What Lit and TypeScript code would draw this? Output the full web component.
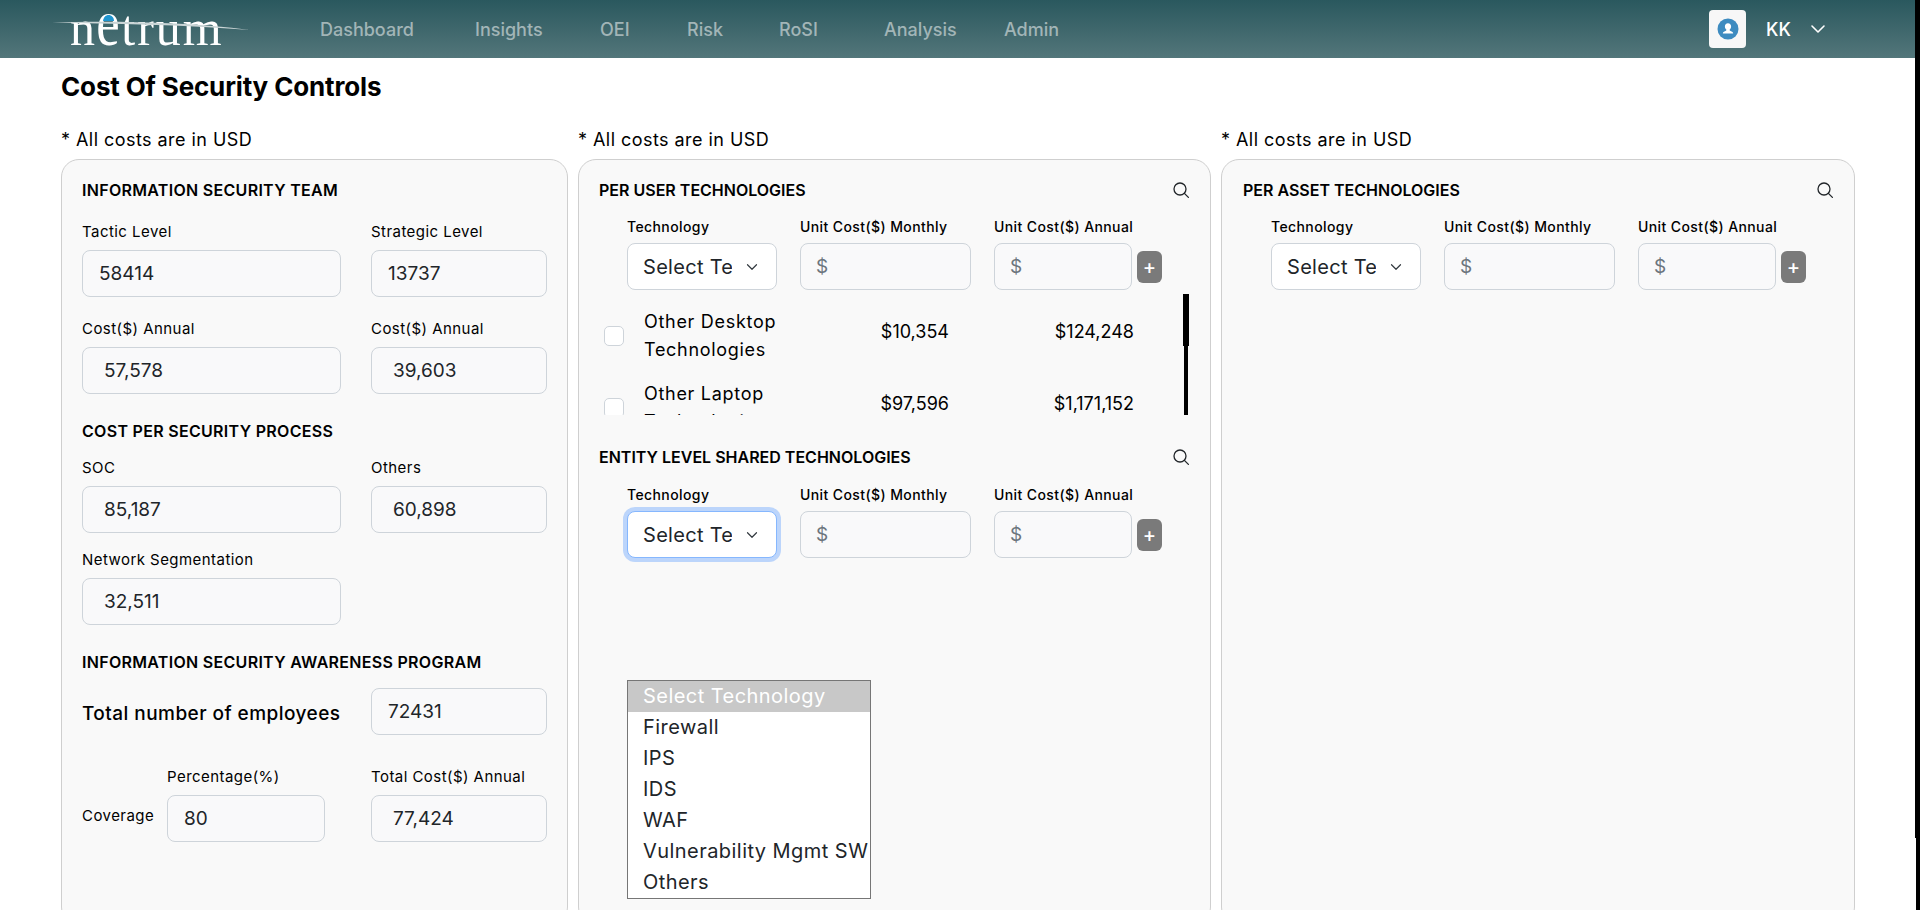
import { LitElement, html, css } from 'lit';
import { customElement } from 'lit/decorators.js';

const chevron = (w: number, color: string, sw: number) => html`<svg width=${w} height=${w} viewBox="0 0 16 16" fill="none" stroke=${color} stroke-width=${sw} stroke-linecap="round" stroke-linejoin="round"><path d="M2 5l6 6 6-6"/></svg>`;

const searchIcon = html`<svg class="search" width="18" height="18" viewBox="0 0 18 18" fill="none" stroke="#212529" stroke-width="1.3" stroke-linecap="round"><circle cx="8" cy="8" r="6"/><path d="M12.4 12.4l4 4"/></svg>`;

@customElement('tech-section')
class TechSection extends LitElement {
  static properties = {
    heading: {},
    focused: { type: Boolean },
  };
  declare heading: string;
  declare focused: boolean;

  static styles = css`
    :host { display: block; font-family: Inter, "Liberation Sans", sans-serif; }
    .head { display: flex; justify-content: space-between; align-items: center; height: 22px; }
    h3 { margin: 0; font-size: 16px; line-height: 22px; font-weight: 600; color: #000; }
    .row { display: grid; grid-template-columns: 150px 171px 138px 25px; column-gap: 23px; margin: 16px 0 0 28px; align-items: center; }
    :host([focused]) .row { margin-top: 17px; }
    label { font-size: 14px; line-height: 20px; font-weight: 500; letter-spacing: 0.4px; color: #000; white-space: nowrap; padding-bottom: 6px; }
    select, input { box-sizing: border-box; height: 47px; width: 100%; border: 1px solid #ced4da; border-radius: 8px; font: 400 19px Inter, "Liberation Sans", sans-serif; color: #212529; outline: none; }
    select {
      appearance: none; background: #fff url("data:image/svg+xml,%3csvg xmlns='http://www.w3.org/2000/svg' viewBox='0 0 16 16'%3e%3cpath fill='none' stroke='%23343a40' stroke-linecap='round' stroke-linejoin='round' stroke-width='1.6' d='M2 5l6 6 6-6'/%3e%3c/svg%3e") no-repeat right 18px center / 12px 12px;
      padding: 0 44px 0 15px; font-size: 20px; letter-spacing: 0.3px;
    }
    select.focused { border-color: #86b7fe; box-shadow: 0 0 0 4px #bcd5fb; }
    input { background: #f9f9fa; padding: 0 15px; }
    input::placeholder { color: #6c757d; opacity: 1; }
    .add { width: 25px; height: 32px; margin-left: -18px; border: 0; padding: 0; border-radius: 6px; background: #7a7a7a; color: #fff; font: 500 20px Inter, sans-serif; }
  `;

  render() {
    return html`
      <div class="head"><h3>${this.heading}</h3>${searchIcon}</div>
      <div class="row">
        <label>Technology</label>
        <label>Unit Cost($) Monthly</label>
        <label>Unit Cost($) Annual</label>
        <span></span>
        <select class=${this.focused ? 'focused' : ''}><option>Select Technology</option></select>
        <input placeholder="$" />
        <input placeholder="$" />
        <button class="add">+</button>
      </div>
    `;
  }
}

@customElement('app-root')
export class AppRoot extends LitElement {
  static styles = css`
    :host {
      display: block; position: relative; height: 100vh; overflow: hidden;
      font-family: Inter, "Liberation Sans", sans-serif; color: #000; background: #fff;
    }

    /* page scrollbar, the browser hides the real one */
    .page-track { position: absolute; top: 0; right: 0; bottom: 0; width: 4px; background: #000; }
    .page-thumb { position: absolute; top: 0; right: 0; width: 5px; height: 838px; background: #000; }

    .page { width: 1915px; }
    header {
      height: 58px; background: linear-gradient(180deg, #2a585e 0%, #53767a 100%);
      display: flex; align-items: center; color: #fff;
    }
    .logo { position: relative; width: 200px; height: 58px; margin-left: 52px; flex: none; }
    .logo-text {
      position: absolute; left: 18px; bottom: 8px; font-family: "Liberation Serif", serif;
      font-size: 50px; line-height: 44px; color: #fff; white-space: nowrap; letter-spacing: 2px;
    }
    .logo-text .e { display: inline-block; font-size: 66px; line-height: 44px; transform: scaleX(0.8); margin: 0 -3px 0 -4px; }
    .logo svg { position: absolute; inset: 0; }
    nav { display: grid; grid-template-columns: 155px 125px 87px 92px 105px 120px 80px; margin-left: 68px; }
    nav a { font-size: 18px; font-weight: 500; color: #a2b5b7; white-space: nowrap; }
    .user { margin-left: auto; display: flex; align-items: center; padding-right: 89px; }
    .avatar { width: 37px; height: 38px; border-radius: 4px; background: #f7f7f7; display: flex; align-items: center; justify-content: center; margin-right: 20px; }
    .kk { font-size: 18px; font-weight: 500; width: 44px; }

    h1 { margin: 11px 0 0; padding-left: 61px; font-size: 26px; line-height: 36px; font-weight: 700; letter-spacing: -0.15px; }
    .cols { display: grid; grid-template-columns: 507px 633px 634px; column-gap: 10px; padding-left: 61px; margin-top: 20px; }
    .note { font-size: 18px; line-height: 30px; height: 34px; letter-spacing: 0.45px; white-space: nowrap; }
    .card {
      box-sizing: border-box; height: 766px; background: #f9f9f9; border: 1.5px solid #cfcfcf; border-radius: 18px;
      padding: 19px 20px;
    }
    .card.asset { padding-left: 21px; }

    h3 { margin: 0; font-size: 16px; line-height: 22px; font-weight: 600; letter-spacing: 0.3px; white-space: nowrap; }
    .fields { display: grid; grid-template-columns: 259px 176px; column-gap: 30px; margin-top: 16px; }
    label { display: block; font-size: 15px; line-height: 20px; letter-spacing: 0.45px; margin-bottom: 8px; white-space: nowrap; }
    .field { margin-bottom: 17px; }
    input {
      box-sizing: border-box; display: block; width: 100%; height: 47px; background: #f9f9fa;
      border: 1px solid #ced4da; border-radius: 8px; padding: 0 16px; outline: none;
      font: 400 19px Inter, "Liberation Sans", sans-serif; color: #212529;
    }
    input.wide { padding-left: 21px; }

    .fields.first { margin-top: 21px; }
    .first .field { margin-bottom: 22px; }
    .sec-process { margin-top: 4px; }
    .sec-awareness { margin-top: 9px; }
    .employees { display: grid; grid-template-columns: 259px 176px; column-gap: 30px; align-items: center; margin-top: 15px; }
    .employees span { font-size: 19px; font-weight: 500; letter-spacing: 0.45px; white-space: nowrap; padding-top: 3px; }
    .coverage { display: grid; grid-template-columns: 85px 158px 176px; margin-top: 32px; }
    .coverage .last { margin-left: 46px; width: 176px; }
    .coverage .cap { font-size: 15px; letter-spacing: 0.45px; align-self: center; padding-bottom: 6px; }

    .list-wrap { position: relative; width: 585px; height: 121px; margin: 4px 0 0 5px; }
    .list { height: 121px; overflow: hidden; padding-top: 14px; box-sizing: border-box; }
    .list-track { position: absolute; top: 0; right: 1px; bottom: 0; width: 4px; background: #000; }
    .list-thumb { position: absolute; top: 0; right: -1px; width: 6px; height: 52px; background: #000; }
    .item { display: grid; grid-template-columns: 20px 188px 137px 185px; align-items: center; margin-bottom: 16px; height: 56px; }
    .check { width: 20px; height: 20px; box-sizing: border-box; background: #fff; border: 1px solid #ced4da; border-radius: 5px; }
    .name { font-size: 18px; line-height: 28px; letter-spacing: 0.7px; padding-left: 20px; }
    .num { font-size: 18px; text-align: right; padding-bottom: 10px; }

    .sec-entity { margin-top: 31px; position: relative; }
    .dropdown {
      position: absolute; left: 28px; top: 234px; width: 244px; height: 219px; box-sizing: border-box;
      background: #fff; border: 1px solid #767676; font-size: 20px; letter-spacing: 0.45px; color: #212529;
    }
    .dropdown div { height: 31px; line-height: 31px; padding-left: 15px; white-space: nowrap; overflow: hidden; }
    .dropdown .sel { background: #c8c8c8; color: #fff; }
  `;

  private field(label: string, value: string, wide = false) {
    return html`<div class="field"><label>${label}</label><input class=${wide ? 'wide' : ''} .value=${value} /></div>`;
  }

  private item(name: string, monthly: string, annual: string) {
    return html`<div class="item">
      <span class="check"></span>
      <span class="name">${name}</span>
      <span class="num">${monthly}</span>
      <span class="num">${annual}</span>
    </div>`;
  }

  render() {
    const nav = ['Dashboard', 'Insights', 'OEI', 'Risk', 'RoSI', 'Analysis', 'Admin'];
    const options = ['Firewall', 'IPS', 'IDS', 'WAF', 'Vulnerability Mgmt SW', 'Others'];
    return html`
      <div class="page">
        <header>
          <div class="logo">
            <div class="logo-text">n<span class="e">e</span>trum</div>
            <svg width="200" height="58" viewBox="0 0 200 58">
              <path d="M0 22.5 C50 21 130 21 198 30 C130 24.5 60 24 0 22.5Z" fill="#c9d4d5"/>
              <path d="M51 21 C51.5 17 54 15 56.5 15 C59.5 15 62 17.5 62 21Z" fill="#1f95cf"/>
            </svg>
          </div>
          <nav>${nav.map((n) => html`<a>${n}</a>`)}</nav>
          <div class="user">
            <div class="avatar">
              <svg width="22" height="22" viewBox="0 0 22 22"><circle cx="11" cy="11" r="10.5" fill="#3d8bc0"/><path d="M11 5.2c-2 0-3.1 1.5-3.1 3.3 0 1.3.6 2.4 1.4 3 .2.5.1 1-.4 1.3-1.2.6-2.9.9-3.1 2.7h10.4c-.2-1.8-1.9-2.1-3.1-2.7-.5-.3-.6-.8-.4-1.3.8-.6 1.4-1.7 1.4-3 0-1.8-1.1-3.3-3.1-3.3z" fill="#fff"/></svg>
            </div>
            <span class="kk">KK</span>
            ${chevron(16, '#fff', 1.6)}
          </div>
        </header>

        <h1>Cost Of Security Controls</h1>

        <div class="cols">
          <section>
            <div class="note">* All costs are in USD</div>
            <div class="card">
              <h3>INFORMATION SECURITY TEAM</h3>
              <div class="fields first">
                ${this.field('Tactic Level', '58414')}
                ${this.field('Strategic Level', '13737')}
                ${this.field('Cost($) Annual', '57,578', true)}
                ${this.field('Cost($) Annual', '39,603', true)}
              </div>
              <div class="sec-process">
                <h3>COST PER SECURITY PROCESS</h3>
                <div class="fields">
                  ${this.field('SOC', '85,187', true)}
                  ${this.field('Others', '60,898', true)}
                  ${this.field('Network Segmentation', '32,511', true)}
                </div>
              </div>
              <div class="sec-awareness">
                <h3>INFORMATION SECURITY AWARENESS PROGRAM</h3>
                <div class="employees">
                  <span>Total number of employees</span>
                  <input .value=${'72431'} />
                </div>
                <div class="coverage">
                  <span></span>
                  <label>Percentage(%)</label>
                  <label class="last">Total Cost($) Annual</label>
                  <span class="cap">Coverage</span>
                  <input .value=${'80'} />
                  <input class="last wide" .value=${'77,424'} />
                </div>
              </div>
            </div>
          </section>

          <section>
            <div class="note">* All costs are in USD</div>
            <div class="card">
              <tech-section heading="PER USER TECHNOLOGIES"></tech-section>
              <div class="list-wrap">
                <div class="list">
                  ${this.item('Other Desktop Technologies', '$10,354', '$124,248')}
                  ${this.item('Other Laptop Technologies', '$97,596', '$1,171,152')}
                </div>
                <div class="list-track"><div class="list-thumb"></div></div>
              </div>
              <div class="sec-entity">
                <tech-section heading="ENTITY LEVEL SHARED TECHNOLOGIES" focused></tech-section>
                <div class="dropdown">
                  <div class="sel">Select Technology</div>
                  ${options.map((o) => html`<div>${o}</div>`)}
                </div>
              </div>
            </div>
          </section>

          <section>
            <div class="note">* All costs are in USD</div>
            <div class="card asset">
              <tech-section heading="PER ASSET TECHNOLOGIES"></tech-section>
            </div>
          </section>
        </div>
      </div>
      <div class="page-track"><div class="page-thumb"></div></div>
    `;
  }
}
